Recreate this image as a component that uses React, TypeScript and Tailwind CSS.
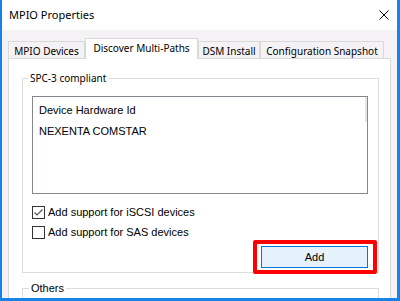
export default function App() {
  const tahoma = "font-['Liberation_Sans',Arial,sans-serif] text-[11px]";
  return (
    <div className="w-[400px] h-[301px] flex flex-col bg-[#f4f2f4] border-l-2 border-r-[3px] border-b-[3px] border-[#1883e6] overflow-hidden font-['Noto_Sans',sans-serif] text-black">
      <div className="h-[30px] shrink-0 bg-white flex items-center justify-between pl-[7px] pr-[8px]">
        <span className="text-[11px] leading-[14px]">MPIO Properties</span>
        <svg width="10" height="10" viewBox="0 0 10 10">
          <path d="M0.5 0.5 L9.5 9.5 M9.5 0.5 L0.5 9.5" stroke="#000" strokeWidth="1" fill="none" />
        </svg>
      </div>
      <div className="flex-1 flex flex-col px-[6px] pt-[8px] min-h-0">
        <div className="flex items-end h-[20px] shrink-0 text-[10px] leading-[14px]">
          <div className="w-[77px] h-[17px] border-t border-l border-r border-[#d9d9d9] flex items-center justify-center pt-[1px]">
            MPIO Devices
          </div>
          <div className="relative z-10 w-[113px] h-[21px] -mb-[1px] bg-white border-t border-l border-r border-[#d9d9d9] flex items-center justify-center pb-[2px]">
            Discover Multi-Paths
          </div>
          <div className="w-[62px] h-[17px] border-t border-l border-r border-[#d9d9d9] flex items-center justify-center pt-[1px]">
            DSM Install
          </div>
          <div className="w-[124px] h-[17px] border-t border-l border-r border-[#d9d9d9] flex items-center justify-center pt-[1px]">
            Configuration Snapshot
          </div>
        </div>
        <div className="flex-1 bg-white border-l border-r border-t border-[#d9d9d9] min-h-0 overflow-hidden">
          <fieldset className="ml-[13px] mt-[12px] w-[357px] border border-[#dcdcdc] pl-[5px] pr-0 pt-[11px] pb-[4px] m-0">
            <legend className="px-[2px] text-[10px] leading-[14px]">SPC-3 compliant</legend>
            <div className={`ml-[4px] w-[336px] h-[98px] border border-[#828790] flex ${tahoma}`}>
              <div className="flex-1 pl-[6px] pt-[3px] leading-[21px]">
                <div>Device Hardware Id</div>
                <div>NEXENTA COMSTAR</div>
              </div>
              <div className="w-[2px] h-[25px] bg-[#e6e6e6]" />
            </div>
            <div className={`mt-[12px] ml-[4px] flex items-center gap-[3px] h-[13px] ${tahoma} leading-[13px]`}>
              <div className="w-[13px] h-[13px] border border-[#333333] bg-white flex items-center justify-center">
                <svg width="11" height="11" viewBox="0 0 11 11">
                  <path d="M1.5 5.5 L4 8 L9.5 2.5" stroke="#555" strokeWidth="1.2" fill="none" />
                </svg>
              </div>
              <span>Add support for iSCSI devices</span>
            </div>
            <div className={`mt-[7px] ml-[4px] flex items-center gap-[3px] h-[13px] ${tahoma} leading-[13px]`}>
              <div className="w-[13px] h-[13px] border border-[#333333] bg-white" />
              <span>Add support for SAS devices</span>
            </div>
            <div className="mt-[7px] w-[340px] flex justify-end">
              <div className="relative">
                <div className={`w-[107px] h-[22px] bg-[#e5f1fb] border border-[#0078d7] flex items-center justify-center ${tahoma}`}>
                  Add
                </div>
                <div className="absolute -left-[8px] -top-[6px] -right-[9px] -bottom-[6px] border-[4px] border-[#ff0000] rounded-[2px]" />
              </div>
            </div>
          </fieldset>
          <fieldset className={`ml-[13px] mt-[8px] w-[357px] h-[60px] border border-[#dcdcdc] pl-[6px] pr-0 pt-0 pb-0 m-0 ${tahoma}`}>
            <legend className="px-[2px] leading-[14px]">Others</legend>
          </fieldset>
        </div>
      </div>
    </div>
  );
}
